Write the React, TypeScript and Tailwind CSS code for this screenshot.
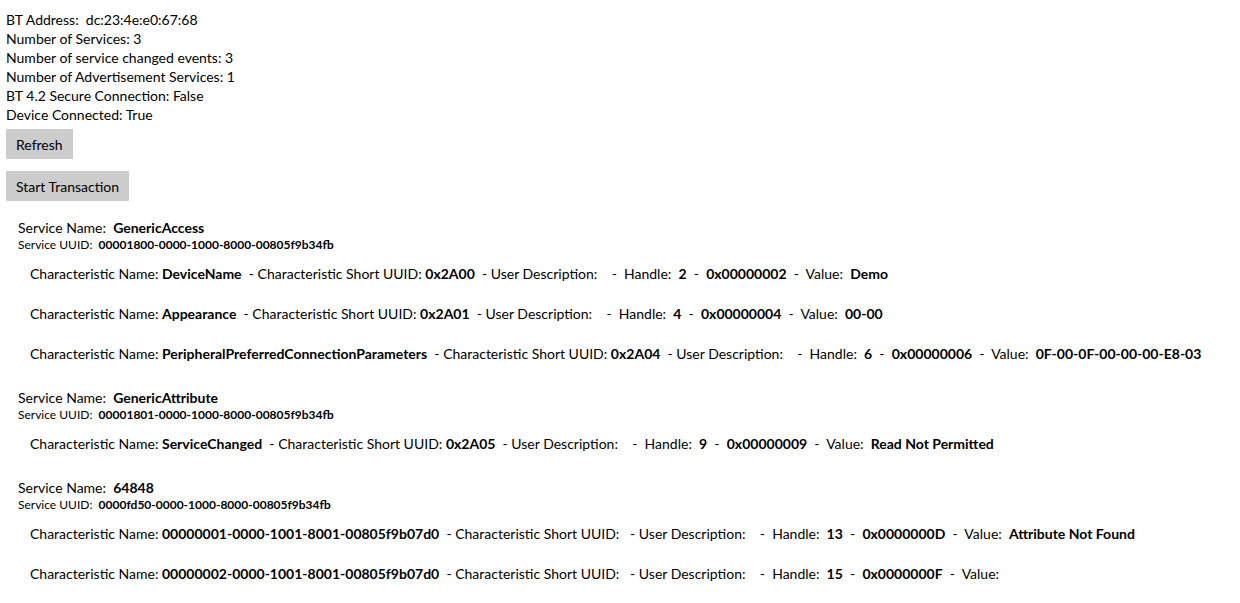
import React from 'react';

type Characteristic = {
    name: string
    short: string
    handle: string
    hex: string
    value: string
}

type Service = {
    name: string
    uuid: string
    chars: Characteristic[]
}

const services: Service[] = [
    {
        name: 'GenericAccess',
        uuid: '00001800-0000-1000-8000-00805f9b34fb',
        chars: [
            {name: 'DeviceName', short: '0x2A00', handle: '2', hex: '0x00000002', value: 'Demo'},
            {name: 'Appearance', short: '0x2A01', handle: '4', hex: '0x00000004', value: '00-00'},
            {
                name: 'PeripheralPreferredConnectionParameters',
                short: '0x2A04',
                handle: '6',
                hex: '0x00000006',
                value: '0F-00-0F-00-00-00-E8-03'
            },
        ]
    },
    {
        name: 'GenericAttribute',
        uuid: '00001801-0000-1000-8000-00805f9b34fb',
        chars: [
            {name: 'ServiceChanged', short: '0x2A05', handle: '9', hex: '0x00000009', value: 'Read Not Permitted'},
        ]
    },
    {
        name: '64848',
        uuid: '0000fd50-0000-1000-8000-00805f9b34fb',
        chars: [
            {
                name: '00000001-0000-1001-8001-00805f9b07d0',
                short: '',
                handle: '13',
                hex: '0x0000000D',
                value: 'Attribute Not Found'
            },
            {name: '00000002-0000-1001-8001-00805f9b07d0', short: '', handle: '15', hex: '0x0000000F', value: ''},
        ]
    },
]

const info = [
    'BT Address:  dc:23:4e:e0:67:68',
    'Number of Services: 3',
    'Number of service changed events: 3',
    'Number of Advertisement Services: 1',
    'BT 4.2 Secure Connection: False',
    'Device Connected: True',
]

const CharRow = ({c}: { c: Characteristic }) => {
    return (
        <div className="h-[40px] flex items-center pl-[24px] whitespace-pre">
            <span>Characteristic Name: </span>
            <b className="font-bold">{c.name}</b>
            <span>{'  - Characteristic Short UUID: '}</span>
            <b className="font-bold">{c.short}</b>
            <span>{'  - User Description:    -  Handle:  '}</span>
            <b className="font-bold">{c.handle}</b>
            <span>{'  -  '}</span>
            <b className="font-bold">{c.hex}</b>
            <span>{'  -  Value:  '}</span>
            <b className="font-bold">{c.value}</b>
        </div>
    )
}

const App = () => {
    return (
        <div className="min-h-screen bg-white text-black text-[14px] leading-[19px] pt-[10px] pl-[6px]"
             style={{fontFamily: '"Segoe UI", Lato, "Liberation Sans", sans-serif'}}>
            <div>
                {info.map((line) => (
                    <div key={line} className="whitespace-pre">{line}</div>
                ))}
            </div>

            <div className="flex flex-col items-start gap-[12px] mt-[5px]">
                <button className="h-[30px] px-[10px] bg-[#cccccc]">Refresh</button>
                <button className="h-[30px] px-[10px] bg-[#cccccc]">Start Transaction</button>
            </div>

            <div className="mt-[17px]">
                {services.map((s) => (
                    <div key={s.uuid} className="mb-[15px]">
                        <div className="pl-[12px]">
                            <div className="whitespace-pre">Service Name:  <b className="font-bold">{s.name}</b></div>
                            <div className="whitespace-pre text-[12px] leading-[16px]">Service
                                UUID:  <b className="font-bold">{s.uuid}</b></div>
                        </div>
                        {s.chars.map((c) => (
                            <CharRow key={c.name} c={c}/>
                        ))}
                    </div>
                ))}
            </div>
        </div>
    );
};

export default App;
